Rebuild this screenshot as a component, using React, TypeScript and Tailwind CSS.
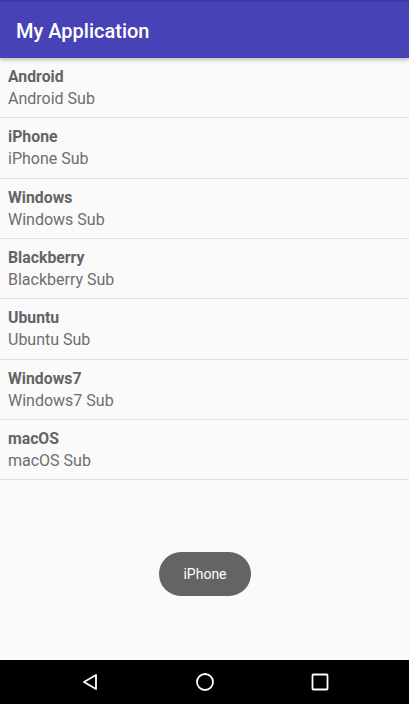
const items = ["Android", "iPhone", "Windows", "Blackberry", "Ubuntu", "Windows7", "macOS"];

export default function App() {
  return (
    <div
      className="flex h-[704px] w-[409px] flex-col overflow-hidden bg-[#fafafa]"
      style={{ fontFamily: "Roboto, 'Liberation Sans', sans-serif" }}
    >
      <header className="relative z-10 flex h-[58px] shrink-0 flex-col bg-[#4742b6] shadow-[0_2px_4px_rgba(0,0,0,0.25)]">
        <div className="h-[2px] bg-[#3e39a8]" />
        <div className="flex flex-1 items-center pl-4 pt-[2px]">
          <span className="text-[20px] font-medium text-white">My Application</span>
        </div>
      </header>
      <div className="relative flex-1">
        <ul className="flex flex-col">
          {items.map((name) => (
            <li key={name} className="flex h-[60.33px] flex-col border-b border-[#dedede] pl-2 pt-[8px]">
              <span className="text-[15.8px] font-bold leading-[22px] text-[#646464]">{name}</span>
              <span className="text-[16px] leading-[22px] text-[#6e6e6e]">{name} Sub</span>
            </li>
          ))}
        </ul>
        <div className="absolute left-[159px] top-[494px] flex h-[44px] w-[92px] items-center justify-center rounded-full bg-[#646464]">
          <span className="text-[14px] text-white">iPhone</span>
        </div>
      </div>
      <nav className="flex h-[44px] shrink-0 items-center justify-center bg-black">
        <div className="flex w-[115px] justify-center">
          <svg width="18" height="18" viewBox="0 0 18 18">
            <path d="M15 2 L3 9 L15 16 Z" fill="none" stroke="white" strokeWidth="1.8" strokeLinejoin="round" />
          </svg>
        </div>
        <div className="flex w-[115px] justify-center">
          <svg width="20" height="20" viewBox="0 0 20 20">
            <circle cx="10" cy="10" r="8" fill="none" stroke="white" strokeWidth="1.8" />
          </svg>
        </div>
        <div className="flex w-[115px] justify-center">
          <svg width="18" height="18" viewBox="0 0 18 18">
            <rect x="1.5" y="1.5" width="15" height="15" rx="1" fill="none" stroke="white" strokeWidth="1.8" />
          </svg>
        </div>
      </nav>
    </div>
  );
}
